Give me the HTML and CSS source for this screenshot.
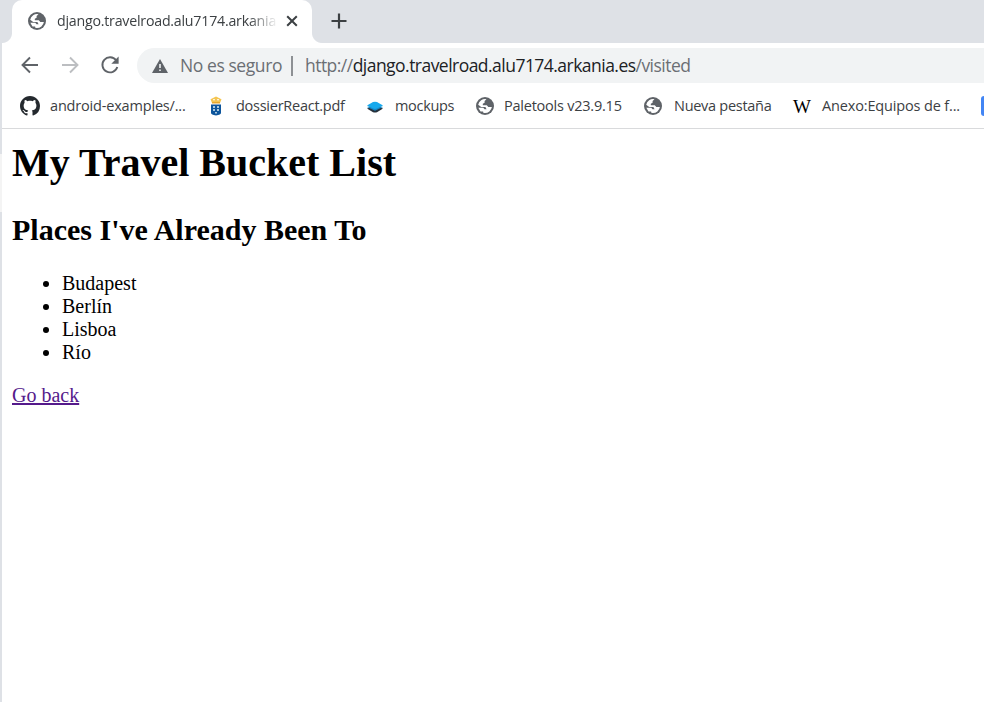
FILE: index.html
```html
<!DOCTYPE html>
<html lang="es">
<head>
<meta charset="utf-8">
<title>My Travel Bucket List</title>
<link rel="stylesheet" href="styles.css">
</head>
<body>
<svg class="defs" width="0" height="0" aria-hidden="true">
  <symbol id="globe" viewBox="0 0 18 18">
    <circle cx="9" cy="9" r="9" fill="#5f6368"/>
    <path fill="#fff" d="M10.500 2.200 8.600 4v1.700L6.800 6.800v1.400h4l1.500 1.900h3.600A7 7 0 0 1 8.600 16L7.300 15.800l-.2-1.400H4.500L2.300 10.800h5l1.200 1.500h2.100L9.400 10H5.200L2.200 7.800A7 7 0 0 1 10.500 2.200z"/>
  </symbol>
</svg>
<div class="browser">
  <header class="tabs">
    <div class="tab">
      <svg class="ico18"><use href="#globe"/></svg>
      <span class="tab-title">django.travelroad.alu7174.arkania</span>
      <svg class="close" viewBox="0 0 12 12"><path d="M1.200 1.200l9.600 9.600M10.800 1.200L1.200 10.800"/></svg>
    </div>
    <svg class="plus" viewBox="0 0 16 16"><path d="M8 .5v15M.5 8h15"/></svg>
  </header>
  <nav class="toolbar">
    <svg class="nav" viewBox="0 0 20 20"><path d="M18 10H3M10 2.500 2.500 10l7.500 7.500"/></svg>
    <svg class="nav off" viewBox="0 0 20 20"><path d="M2 10h15M10 2.500l7.500 7.500-7.500 7.500"/></svg>
    <svg class="nav" viewBox="0 0 20 20"><path d="M16.100 5.200A7.600 7.600 0 1 0 17.300 12"/><path class="fill" d="M18.600 1.400v7.300h-7.300z"/></svg>
    <div class="omnibox">
      <svg class="warn" viewBox="0 0 16 14"><path fill="#5f6368" d="M8 0l8 14H0z"/><path fill="#f1f3f4" d="M7.200 5h1.600v4H7.200zM7.200 10.400h1.600V12H7.200z"/></svg>
      <span class="secure">No es seguro</span>
      <span class="bar"></span>
      <span class="url">http://<b>django.travelroad.alu7174.arkania.es</b>/visited</span>
    </div>
  </nav>
  <div class="bookmarks">
    <svg class="i1" viewBox="0 0 16 16"><path fill="#24292e" d="M8 0C3.58 0 0 3.58 0 8c0 3.54 2.29 6.53 5.47 7.59.4.07.55-.17.55-.38 0-.19-.01-.82-.01-1.49-2.01.37-2.53-.49-2.69-.94-.09-.23-.48-.94-.82-1.13-.28-.15-.68-.52-.01-.53.63-.01 1.08.58 1.23.82.72 1.21 1.87.87 2.33.66.07-.52.28-.87.51-1.07-1.78-.2-3.64-.89-3.64-3.95 0-.87.31-1.59.82-2.15-.08-.2-.36-1.02.08-2.12 0 0 .67-.21 2.200.82.64-.18 1.320-.27 2-.27s1.360.09 2 .27c1.530-1.040 2.200-.82 2.200-.82.44 1.100.16 1.920.08 2.120.51.56.82 1.270.82 2.150 0 3.070-1.870 3.750-3.650 3.950.29.25.54.73.54 1.480 0 1.070-.01 1.930-.01 2.200 0 .21.15.46.55.38A8.010 8.010 0 0 0 16 8c0-4.420-3.580-8-8-8z"/></svg>
    <span class="b1">android-examples/...</span>
    <svg class="i2" viewBox="0 0 12 20"><path fill="#f4c552" d="M2 7 .5 3.200 3 2l3-1.500L9 2l2.500 1.200L10 7z"/><path fill="#fff" d="M3 3.300h2v1H3zM7 3.300h2v1H7z"/><path fill="#e6a72f" d="M2 6h8v1.500H2z"/><path fill="#0d559c" d="M1 8.500h10V17q0 1.800-5 2.500-5-.7-5-2.500z"/><path fill="#a9c9df" d="M3 10h2v2H3zM7 10h2v2H7zM3 13h2v2H3zM7 13h2v2H7zM5 16h2v1.500H5z"/></svg>
    <span class="b2">dossierReact.pdf</span>
    <svg class="i3" viewBox="0 0 18 12"><path fill="#25313c" d="M1 7.500 9 5l8 2.500-6 3.700q-2 .8-4 0z"/><path fill="#1686c5" d="M1 6l8-2 8 2-8 3.800z"/><path fill="#17a9ed" d="M1 4.500 7 1q2-.7 4 0l6 3.500L11 7.600q-2 .8-4 0z"/></svg>
    <span class="b3">mockups</span>
    <svg class="ico18 i4"><use href="#globe"/></svg>
    <span class="b4">Paletools v23.9.15</span>
    <svg class="ico18 i5"><use href="#globe"/></svg>
    <span class="b5">Nueva pestaña</span>
    <span class="wiki">W</span>
    <span class="b6">Anexo:Equipos de f...</span>
    <span class="folder"></span>
  </div>
  <main>
    <h1>My Travel Bucket List</h1>
    <h2>Places I've Already Been To</h2>
    <ul><li>Budapest</li><li>Berlín</li><li>Lisboa</li><li>Río</li></ul>
    <a href="#">Go back</a>
  </main>
</div>
</body>
</html>
```
FILE: styles.css
```css
* { box-sizing: border-box; }
body { margin: 0; width: 984px; height: 702px; overflow: hidden; background: #fff; font-family: "Open Sans", sans-serif; }
svg { flex: none; display: block; }
.defs { position: absolute; }
.browser { height: 702px; padding-left: 2px; background: linear-gradient(#dee1e6 154px, #f4f4f4 154px, #f4f4f4 212px, #dee1e6 212px) 0 0 / 2px 100% no-repeat; }
.tabs { height: 43px; background: #dee1e6; display: flex; align-items: flex-start; }
.tab { position: relative; margin-left: 10px; width: 300px; height: 43px; background: #fff; border-radius: 10px 10px 0 0; display: flex; align-items: center; padding-left: 16px; }
.tab::before, .tab::after { content: ""; position: absolute; bottom: 0; width: 10px; height: 10px; }
.tab::before { left: -10px; background: radial-gradient(circle at 0 0, #dee1e6 9.5px, #fff 10.5px); }
.tab::after { right: -10px; background: radial-gradient(circle at 100% 0, #dee1e6 9.5px, #fff 10.5px); }
.ico18 { width: 18px; height: 18px; margin-top: -1px; }
.tab-title { margin: -2px 0 0 11px; width: 219px; white-space: nowrap; font-size: 14.2px; color: #3c4043; letter-spacing: -.22px; -webkit-mask-image: linear-gradient(90deg, #000 192px, transparent 221px); mask-image: linear-gradient(90deg, #000 192px, transparent 221px); }
.close { width: 12px; height: 12px; margin: -1px 0 0 10px; fill: none; stroke: #3c4043; stroke-width: 2; }
.plus { width: 16px; height: 16px; margin: 13px 0 0 19px; fill: none; stroke: #3c4043; stroke-width: 2.2; }
.toolbar { height: 43px; display: flex; align-items: center; padding-left: 18px; }
.nav { width: 20px; height: 20px; margin-right: 20px; fill: none; stroke: #5f6368; stroke-width: 1.9; }
.nav .fill { fill: #5f6368; stroke: none; }
.off { stroke: #bcbec1; }
.omnibox { flex: 1; margin: 2px 0 0 -3px; height: 35px; background: #f1f3f4; border-radius: 18px 0 0 18px; display: flex; align-items: center; padding-left: 15px; font-size: 17.5px; color: #6b6f74; white-space: nowrap; }
.warn { width: 16px; height: 14px; }
.secure { width: 102px; margin: -1px 0 0 12px; letter-spacing: -.42px; }
.bar { width: 2px; height: 20px; margin: 0 12px 0 9px; background: #8d9094; }
.url { margin-top: -1px; letter-spacing: -.53px; }
.url b { font-weight: 400; color: #202124; }
.bookmarks { height: 43px; border-bottom: 1px solid #d9dadc; display: flex; align-items: center; padding: 0 0 3px 18px; overflow: hidden; font-size: 14.5px; color: #3c4043; white-space: nowrap; }
.bookmarks span { flex: none; }
.i1 { width: 20px; height: 20px; margin-right: 10px; }
.i2 { width: 12px; height: 20px; margin: 0 14px 0 24px; }
.i3 { width: 18px; height: 12px; margin: 3px 11px 0 21px; }
.i4 { margin: 0 10px 0 21px; }
.i5 { margin: 0 12px 0 22px; }
.b1 { width: 136px; letter-spacing: -.18px; }
.b2 { width: 109px; letter-spacing: -.26px; }
.b3 { width: 60px; letter-spacing: -.32px; }
.b4 { width: 118px; letter-spacing: -.23px; }
.b5 { width: 98px; letter-spacing: -.28px; }
.b6 { width: 138px; letter-spacing: -.15px; }
.wiki { width: 18px; margin: 3px 11px 0 21px; font: 19px/20px "Liberation Serif", serif; color: #000; }
.folder { width: 20px; height: 20px; margin-left: 21px; background: #4285f4; border-radius: 3px; }
main { padding: 11px 10px; font: 20px/23px "Liberation Serif", serif; color: #000; }
h1 { margin: 0; font-size: 40px; line-height: 46px; }
h2 { margin: 27px 0 25px; font-size: 30px; line-height: 34px; }
ul { margin: 0 0 20px; padding-left: 50px; }
a { color: #551a8b; text-decoration-thickness: 2px; }
```
